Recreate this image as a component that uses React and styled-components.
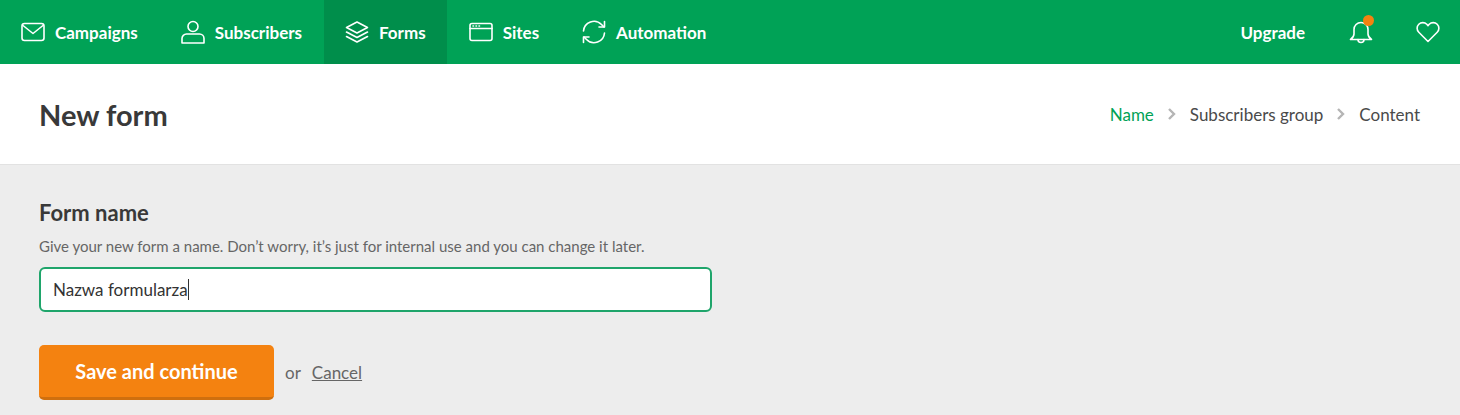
import React from "react";
import styled, { createGlobalStyle } from "styled-components";

const GlobalStyle = createGlobalStyle`
  html, body { margin: 0; padding: 0; background: #ededed; }
  body { font-family: Lato, "Open Sans", Arial, sans-serif; color: #3a3a3a; overflow: hidden; }
  * { box-sizing: border-box; }
`;

const TopBar = styled.nav`
  height: 64px;
  background: #00a256;
  display: flex;
  justify-content: space-between;
  color: #fff;
`;

const NavGroup = styled.div`
  display: flex;
  align-items: stretch;
  gap: ${(p) => p.$gap || 0}px;
`;

const NavItem = styled.a`
  display: flex;
  align-items: center;
  gap: 10px;
  padding: 0 21px;
  font-size: 17px;
  font-weight: 700;
  color: #fff;
  background: ${(p) => (p.$active ? "#008e4b" : "transparent")};
`;

const NavRight = styled.div`
  display: flex;
  align-items: center;
  padding-right: 20px;
`;

const Upgrade = styled.a`
  font-size: 17px;
  font-weight: 700;
  margin-right: 44px;
`;

const IconButton = styled.span`
  position: relative;
  display: flex;
  margin-right: ${(p) => p.$mr || 0}px;
`;

const Dot = styled.span`
  position: absolute;
  top: -5px;
  right: -1px;
  width: 11px;
  height: 11px;
  border-radius: 50%;
  background: #f48210;
`;

const PageHeader = styled.header`
  height: 101px;
  background: #fff;
  border-bottom: 1px solid #e2e2e2;
  display: flex;
  align-items: center;
  justify-content: space-between;
  padding: 0 40px 0 39px;
`;

const Title = styled.h1`
  margin: 0;
  font-size: 29px;
  font-weight: 700;
  color: #393939;
`;

const Steps = styled.ol`
  list-style: none;
  display: flex;
  align-items: center;
  margin: 0;
  padding: 0;
  font-size: 17px;
`;

const Step = styled.li`
  color: ${(p) => (p.$current ? "#00a256" : "#4a4a4a")};
`;

const StepArrow = styled.svg`
  margin: 0 13px;
  display: block;
`;

const Main = styled.main`
  padding: 34px 39px 0;
`;

const FieldTitle = styled.h2`
  margin: 0;
  font-size: 22px;
  line-height: 28px;
  font-weight: 700;
  color: #393939;
`;

const Hint = styled.p`
  margin: 9px 0 0;
  font-size: 15px;
  line-height: 20px;
  color: #666;
`;

const InputBox = styled.div`
  margin-top: 11px;
  width: 673px;
  height: 45px;
  background: #fff;
  border: 2px solid #1fa56b;
  border-radius: 6px;
  display: flex;
  align-items: center;
  padding-left: 12px;
  font-size: 17px;
  color: #333;
`;

const Caret = styled.span`
  display: inline-block;
  width: 1px;
  height: 21px;
  background: #333;
`;

const Actions = styled.div`
  margin-top: 33px;
  display: flex;
  align-items: center;
`;

const SaveButton = styled.button`
  width: 235px;
  height: 55px;
  border: 0;
  border-bottom: 3px solid #cf6f0e;
  border-radius: 5px;
  background: #f48210;
  color: #fff;
  font-family: inherit;
  font-size: 20px;
  font-weight: 700;
  padding: 0;
`;

const Or = styled.span`
  margin-left: 11px;
  font-size: 17px;
  color: #666;
`;

const CancelLink = styled.a`
  margin-left: 11px;
  font-size: 17px;
  color: #666;
  text-decoration: underline;
`;

const Stroke = ({ w = 24, h = 24, children }) => (
  <svg width={w} height={h} viewBox={`0 0 ${w} ${h}`} fill="none" stroke="#fff" strokeWidth="1.6" strokeLinecap="round" strokeLinejoin="round">
    {children}
  </svg>
);

const App = () => {
  return (
    <>
      <GlobalStyle />
      <TopBar>
        <NavGroup $gap={1}>
          <NavItem>
            <Stroke>
              <rect x="1" y="3.5" width="22" height="17" rx="2.5" />
              <path d="M2 5.5l10 8 10-8" />
            </Stroke>
            Campaigns
          </NavItem>
          <NavItem>
            <Stroke>
              <circle cx="12" cy="6.5" r="5" />
              <path d="M1 23v-4.5a4.5 4.5 0 0 1 4.5-4.5h13a4.5 4.5 0 0 1 4.5 4.5V23z" />
            </Stroke>
            Subscribers
          </NavItem>
          <NavItem $active>
            <Stroke>
              <path d="M12 2l10.500 5.500L12 13 1.500 7.500z" />
              <path d="M1.500 12L12 17.500 22.500 12" />
              <path d="M1.500 16.500L12 22l10.500-5.500" />
            </Stroke>
            Forms
          </NavItem>
          <NavItem>
            <Stroke>
              <rect x="1" y="3.500" width="22" height="17" rx="2" />
              <path d="M1 8.500h22" />
              <path d="M4 6h.5M7 6h.5M10 6h.5" />
            </Stroke>
            Sites
          </NavItem>
          <NavItem>
            <Stroke>
              <path d="M1.500 11A10.500 10.500 0 0 1 19.500 4.500L22 7" />
              <path d="M22.500 1.500V7h-5.500" />
              <path d="M22.500 13A10.500 10.500 0 0 1 4.500 19.500L2 17" />
              <path d="M1.500 22.500V17h5.500" />
            </Stroke>
            Automation
          </NavItem>
        </NavGroup>
        <NavRight>
          <Upgrade>Upgrade</Upgrade>
          <IconButton $mr={43}>
            <Stroke>
              <path d="M12 2.500a7 7 0 0 0-7 7v4.500c0 2.500-1.500 4-3.500 5.500h21c-2-1.500-3.500-3-3.500-5.500V9.500a7 7 0 0 0-7-7z" />
              <path d="M9 19.500a3 3 0 0 0 6 0" />
            </Stroke>
            <Dot />
          </IconButton>
          <IconButton>
            <Stroke>
              <path d="M12 21.500L2.800 12.300a5.600 5.600 0 0 1 0-8 5.600 5.600 0 0 1 8 0l1.200 1.300 1.200-1.300a5.600 5.600 0 0 1 8 0 5.600 5.600 0 0 1 0 8z" />
            </Stroke>
          </IconButton>
        </NavRight>
      </TopBar>
      <PageHeader>
        <Title>New form</Title>
        <Steps>
          <Step $current>Name</Step>
          <StepArrow width="10" height="14" viewBox="0 0 10 14" fill="none" stroke="#b5b5b5" strokeWidth="2.4">
            <path d="M2 2l5 5-5 5" />
          </StepArrow>
          <Step>Subscribers group</Step>
          <StepArrow width="10" height="14" viewBox="0 0 10 14" fill="none" stroke="#b5b5b5" strokeWidth="2.4">
            <path d="M2 2l5 5-5 5" />
          </StepArrow>
          <Step>Content</Step>
        </Steps>
      </PageHeader>
      <Main>
        <FieldTitle>Form name</FieldTitle>
        <Hint>Give your new form a name. Don’t worry, it’s just for internal use and you can change it later.</Hint>
        <InputBox>
          Nazwa formularza
          <Caret />
        </InputBox>
        <Actions>
          <SaveButton>Save and continue</SaveButton>
          <Or>or</Or>
          <CancelLink>Cancel</CancelLink>
        </Actions>
      </Main>
    </>
  );
};

export default App;
